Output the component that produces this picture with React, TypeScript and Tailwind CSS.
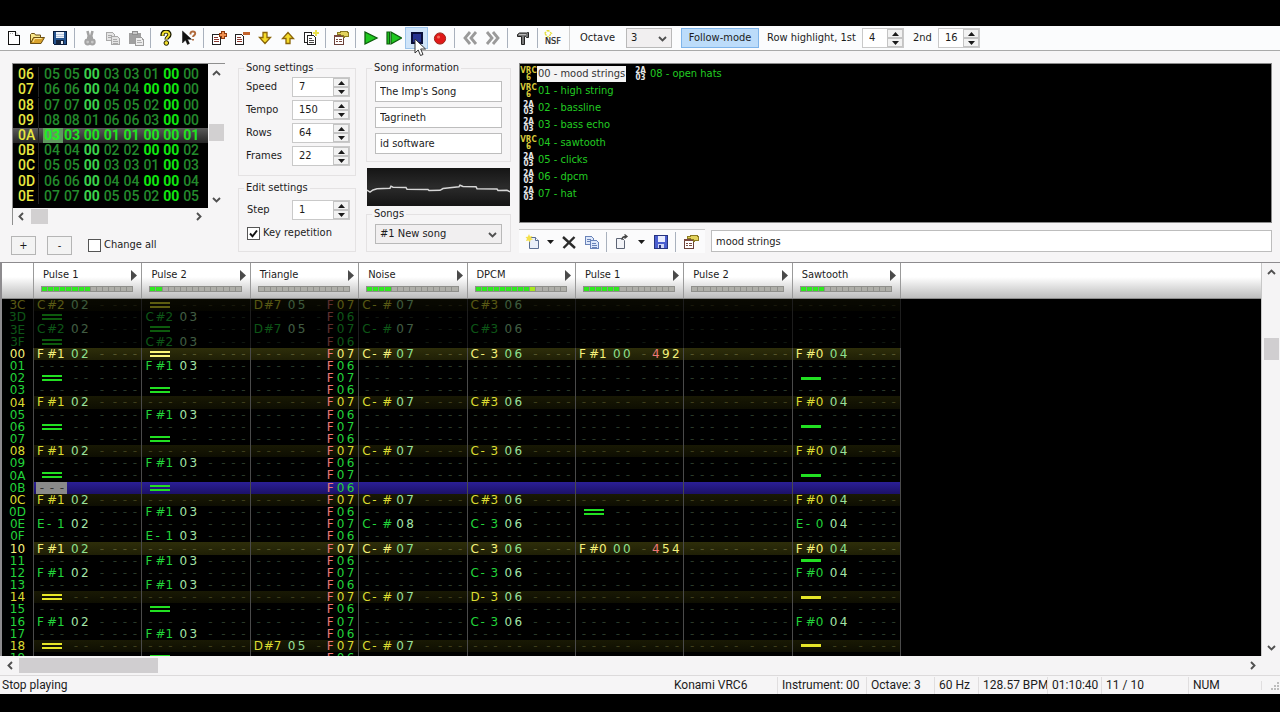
import type { ReactNode } from "react";

/* ---------- data ---------- */

const FRAMES: [string, string][] = [
  ["06", "05 05 00 03 03 01 00 00"],
  ["07", "06 06 00 04 04 00 00 00"],
  ["08", "07 07 00 05 05 02 00 00"],
  ["09", "08 08 01 06 06 03 00 00"],
  ["0A", "03 03 00 01 01 00 00 01"],
  ["0B", "04 04 00 02 02 00 00 02"],
  ["0C", "05 05 00 03 03 01 00 03"],
  ["0D", "06 06 00 04 04 00 00 04"],
  ["0E", "07 07 00 05 05 02 00 05"],
];
const CURRENT_FRAME = "0A";
const CURRENT_VALUES = "03 03 00 01 01 00 00 01".split(" ");

const CHANNELS = [
  { name: "Pulse 1", level: 8 },
  { name: "Pulse 2", level: 2 },
  { name: "Triangle", level: 0 },
  { name: "Noise", level: 4 },
  { name: "DPCM", level: 10 },
  { name: "Pulse 1", level: 6 },
  { name: "Pulse 2", level: 0 },
  { name: "Sawtooth", level: 4 },
];

/* Cell text: note, instrument, effect. "==" halts a note, "__" releases it. */
const PATTERN: { row: string; ghost?: boolean; cells: string[] }[] = [
  { row: "3C", ghost: true, cells: ["C#2 02", "==", "D#7 05 F07", "C-# 07", "C#3 06", "", "", ""] },
  { row: "3D", ghost: true, cells: ["==", "C#2 03", "... .. F06", "", "", "", "", ""] },
  { row: "3E", ghost: true, cells: ["C#2 02", "==", "D#7 05 F07", "C-# 07", "C#3 06", "", "", ""] },
  { row: "3F", ghost: true, cells: ["==", "C#2 03", "... .. F06", "", "", "", "", ""] },
  { row: "00", cells: ["F#1 02", "==", "... .. F07", "C-# 07", "C-3 06", "F#1 00 492", "", "F#0 04"] },
  { row: "01", cells: ["", "F#1 03", "... .. F06", "", "", "", "", ""] },
  { row: "02", cells: ["==", "", "... .. F07", "", "", "", "", "__"] },
  { row: "03", cells: ["", "==", "... .. F06", "", "", "", "", ""] },
  { row: "04", cells: ["F#1 02", "", "... .. F07", "C-# 07", "C#3 06", "", "", "F#0 04"] },
  { row: "05", cells: ["", "F#1 03", "... .. F06", "", "", "", "", ""] },
  { row: "06", cells: ["==", "", "... .. F07", "", "", "", "", "__"] },
  { row: "07", cells: ["", "==", "... .. F06", "", "", "", "", ""] },
  { row: "08", cells: ["F#1 02", "", "... .. F07", "C-# 07", "C-3 06", "", "", "F#0 04"] },
  { row: "09", cells: ["", "F#1 03", "... .. F06", "", "", "", "", ""] },
  { row: "0A", cells: ["==", "", "... .. F07", "", "", "", "", "__"] },
  { row: "0B", cells: ["", "==", "... .. F06", "", "", "", "", ""] },
  { row: "0C", cells: ["F#1 02", "", "... .. F07", "C-# 07", "C#3 06", "", "", "F#0 04"] },
  { row: "0D", cells: ["", "F#1 03", "... .. F06", "", "", "==", "", ""] },
  { row: "0E", cells: ["E-1 02", "", "... .. F07", "C-# 08", "C-3 06", "", "", "E-0 04"] },
  { row: "0F", cells: ["", "E-1 03", "... .. F06", "", "", "", "", ""] },
  { row: "10", cells: ["F#1 02", "", "... .. F07", "C-# 07", "C-3 06", "F#0 00 454", "", "F#0 04"] },
  { row: "11", cells: ["", "F#1 03", "... .. F06", "", "", "", "", "__"] },
  { row: "12", cells: ["F#1 02", "", "... .. F07", "", "C-3 06", "", "", "F#0 04"] },
  { row: "13", cells: ["", "F#1 03", "... .. F06", "", "", "", "", ""] },
  { row: "14", cells: ["==", "", "... .. F07", "C-# 07", "D-3 06", "", "", "__"] },
  { row: "15", cells: ["", "==", "... .. F06", "", "", "", "", ""] },
  { row: "16", cells: ["F#1 02", "", "... .. F07", "", "C-3 06", "", "", "F#0 04"] },
  { row: "17", cells: ["", "F#1 03", "... .. F06", "", "", "", "", ""] },
  { row: "18", cells: ["==", "", "D#7 05 F07", "C-# 07", "", "", "", "__"] },
  { row: "19", cells: ["", "==", "... .. F06", "", "", "", "", ""] },
];
const PLAY_ROW = "0B";

const INSTRUMENTS = [
  { name: "00 - mood strings", vrc: true, selected: true },
  { name: "01 - high string", vrc: true },
  { name: "02 - bassline" },
  { name: "03 - bass echo" },
  { name: "04 - sawtooth", vrc: true },
  { name: "05 - clicks" },
  { name: "06 - dpcm" },
  { name: "07 - hat" },
  { name: "08 - open hats" },
];

/* ---------- icons ---------- */

function Icon({ children, smooth }: { children: ReactNode; smooth?: boolean }) {
  return (
    <svg width="16" height="16" viewBox="0 0 16 16" shapeRendering={smooth ? "auto" : "crispEdges"} aria-hidden="true">
      {children}
    </svg>
  );
}

const NewIcon = () => (
  <Icon>
    <path d="M2.5 1.5h7l4 4v9h-11z" fill="#fff" stroke="#111" />
    <path d="M9.5 1.5v4h4" fill="#ddd" stroke="#111" />
    <path d="M4 3h4" stroke="#aaa" strokeDasharray="1 1" />
  </Icon>
);
const OpenIcon = () => (
  <Icon smooth>
    <path d="M1.5 13.5v-9l1-1h3l1 1.5h5v3" fill="#f7e68a" stroke="#6b4f12" />
    <path d="M1.5 13.5l3-6h11l-3.5 6z" fill="#d9a22c" stroke="#6b4f12" />
    <path d="M4 12l1.700-3.500h7" fill="none" stroke="#fbe9a0" />
  </Icon>
);
const SaveIcon = () => (
  <Icon>
    <path d="M1.500 1.500h13v13h-12l-1-1z" fill="#24538f" stroke="#0b1d3c" />
    <path d="M4 2h8v6H4z" fill="#eef3fa" />
    <path d="M4 4h8M4 6h8" stroke="#b9c9df" />
    <path d="M4 10h8v4H4z" fill="#16243c" />
    <path d="M9 11h2v3H9z" fill="#e7edf5" />
  </Icon>
);
const CutIcon = () => (
  <Icon smooth>
    <path d="M5.500 1l1.800 7M10.500 1L8.700 8" stroke="#a3a3a3" strokeWidth="2.600" />
    <circle cx="5.700" cy="12" r="2.400" fill="#c9c9c9" stroke="#a3a3a3" strokeWidth="2" />
    <circle cx="10.300" cy="12" r="2.400" fill="#c9c9c9" stroke="#a3a3a3" strokeWidth="2" />
    <path d="M5 6.500h6v4H5z" fill="#a3a3a3" />
  </Icon>
);
const CopyIcon = ({ a = "#a9a9a9", b = "#e4e4e4" }: { a?: string; b?: string }) => (
  <Icon>
    <path d="M1.500 2.500h6l2 2v6h-8z" fill={b} stroke={a} />
    <path d="M3 5h4M3 7h5" stroke={a} />
    <path d="M6.500 6.500h6l2 2v6h-8z" fill={b} stroke={a} />
    <path d="M8 9h4M8 11h5M8 13h5" stroke={a} />
  </Icon>
);
const PasteIcon = () => (
  <Icon>
    <path d="M1 3h12v11H1z" fill="#a0a0a0" />
    <path d="M4 1h5v3H4z" fill="#c9c9c9" stroke="#8f8f8f" />
    <path d="M7.500 7.500h6l1.500 2v5.500H7.500z" fill="#ededed" stroke="#9c9c9c" />
    <path d="M9 10h4M9 12h5" stroke="#b0b0b0" />
  </Icon>
);
const HelpIcon = () => (
  <Icon smooth>
    <path d="M4.500 6V4.500a3.500 3 0 0 1 7 0c0 2.500-3 2.500-3 5" fill="none" stroke="#1b1b00" strokeWidth="4.200" />
    <path d="M4.700 5.700V4.500a3.300 2.800 0 0 1 6.600 0c0 2.300-2.900 2.500-2.900 4.700" fill="none" stroke="#f2de2e" strokeWidth="2" />
    <circle cx="8.300" cy="13" r="2.300" fill="#f2de2e" stroke="#1b1b00" />
  </Icon>
);
const ContextHelpIcon = () => (
  <Icon smooth>
    <path d="M1.500 1v12l3-3 2 4.500 2-1-2-4.200h4z" fill="#111" stroke="#111" strokeWidth=".5" />
    <path d="M9.500 4.500V3.500a2.300 2 0 0 1 4.700 0c0 2-2.200 1.700-2.200 3.500M12 9v1.500" fill="none" stroke="#b06a3c" strokeWidth="1.900" />
  </Icon>
);
const Sheet = () => (
  <>
    <path d="M1.500 4.500h6l2 2v8h-8z" fill="#fff" stroke="#222" />
    <path d="M3 7.500h4M3 9.500h5M3 11.500h5" stroke="#8a3a30" />
  </>
);
const AddFrameIcon = () => (
  <Icon>
    <Sheet />
    <path d="M12 1v8M8 5h8" stroke="#8f3a10" strokeWidth="3.500" />
    <path d="M12 2v6M9 5h6" stroke="#ee9050" strokeWidth="1.500" />
  </Icon>
);
const RemoveFrameIcon = () => (
  <Icon>
    <Sheet />
    <path d="M9 3.500h7" stroke="#c2632c" strokeWidth="2.500" />
  </Icon>
);
const DownIcon = () => (
  <Icon smooth>
    <path d="M6 2.500h4v5h3.500L8 13.500 2.500 7.500H6z" fill="#f5dc2a" stroke="#8a6508" strokeWidth="1.300" />
  </Icon>
);
const UpIcon = () => (
  <Icon smooth>
    <path d="M6 13.500h4v-5h3.500L8 2.500 2.500 8.500H6z" fill="#f5dc2a" stroke="#8a6508" strokeWidth="1.300" />
  </Icon>
);
const DuplicateIcon = () => (
  <Icon>
    <path d="M1.500 2.500h7v10h-7z" fill="#fff" stroke="#222" />
    <path d="M4.500 5.500h6l2 2v7h-8z" fill="#fff" stroke="#222" />
    <path d="M6 8.500h3M6 10.500h5M6 12.500h5" stroke="#444" />
    <path d="M13 0v6M10 3h6" stroke="#e8e04a" strokeWidth="1.500" />
  </Icon>
);
const PropertiesIcon = () => (
  <Icon>
    <path d="M1.500 5.500h9v9h-9z" fill="#fff" stroke="#6b4038" />
    <path d="M3 9.500h2M6 9.500h3M3 11.500h2M6 11.500h3" stroke="#7a4a40" />
    <path d="M1 5h9v2H1z" fill="#7a4a40" />
    <path d="M4 2h3V1h8v1h1v5h-4v1h-2V6H8V5H4z" fill="#8b7a22" />
    <path d="M5 3h3V2h6v1h1v3h-4V5H8V4H5z" fill="#e3d25c" />
  </Icon>
);
const PlayIcon = () => (
  <Icon smooth>
    <path d="M2 2v12l12-6z" fill="#1fc81f" stroke="#0b5c0b" strokeWidth="1.300" />
  </Icon>
);
const PlayFromIcon = () => (
  <Icon smooth>
    <path d="M1 2h2.500v12H1z" fill="#1fc81f" stroke="#0b5c0b" strokeWidth="1.200" />
    <path d="M5 2v12l10.500-6z" fill="#1fc81f" stroke="#0b5c0b" strokeWidth="1.200" />
  </Icon>
);
const StopIcon = () => (
  <Icon>
    <path d="M3 3h10v10H3z" fill="#26328f" stroke="#0a0f3a" strokeWidth="2" />
  </Icon>
);
const RecordIcon = () => (
  <Icon smooth>
    <circle cx="8" cy="8.500" r="5.600" fill="#e01818" stroke="#9a2418" />
    <circle cx="6.500" cy="7" r="1.600" fill="#f06a5a" />
  </Icon>
);
const PrevIcon = () => (
  <Icon smooth>
    <path d="M8 2L3 8l5 6M14 2L9 8l5 6" fill="none" stroke="#9a9a9a" strokeWidth="2.800" />
  </Icon>
);
const NextIcon = () => (
  <Icon smooth>
    <path d="M2 2l5 6-5 6M8 2l5 6-5 6" fill="none" stroke="#9a9a9a" strokeWidth="2.800" />
  </Icon>
);
const HammerIcon = () => (
  <Icon smooth>
    <path d="M2.500 6.500v-2l2-1.500h7l1-.5h1v5h-2l-1-1h-1v8h-3v-8z" fill="#777" stroke="#222" />
    <path d="M4 4.500h7" stroke="#bbb" />
  </Icon>
);
const NsfIcon = () => (
  <svg width="18" height="16" viewBox="0 0 18 16" aria-hidden="true">
    <path d="M4 0l3.500 3.500L4 7 .5 3.500z" fill="none" stroke="#e6df3a" strokeWidth="1.400" strokeDasharray="2 1" />
    <text x="1" y="14" fontSize="9" fill="#222" stroke="#222" strokeWidth=".2" fontFamily="DejaVu Sans Condensed, DejaVu Sans, sans-serif">
      NSF
    </text>
  </svg>
);
const NewInstrumentIcon = () => (
  <Icon smooth>
    <path d="M4.500 3.500h6l3 3v8h-9z" fill="#e9effa" stroke="#5b6f95" />
    <path d="M10.500 3.500v3h3" fill="#fff" stroke="#5b6f95" />
    <path d="M4 0l1 2.500L7.500 2 6 4l2 1.500-2.500.5L5 8.500 3.500 6.500 1 7l1-2.300L.5 3l2.300-.3z" fill="#f4e04a" />
  </Icon>
);
const DeleteIcon = () => (
  <Icon smooth>
    <path d="M2 3l12 11M13.500 3L2.500 14" stroke="#2b2b2b" strokeWidth="2.400" />
  </Icon>
);
const LoadInstrumentIcon = () => (
  <Icon smooth>
    <path d="M2.500 4.500h6l2 2v8h-8z" fill="#f3f4f8" stroke="#5d6475" />
    <path d="M8 6c0-3 1.500-3.500 4-3.500M10.500.5L13 2.500l-2.500 2" fill="none" stroke="#444" strokeWidth="1.300" />
  </Icon>
);
const SaveInstrumentIcon = () => (
  <Icon>
    <path d="M1.500 1.500h13v13h-13z" fill="#4b5fd0" stroke="#27337f" />
    <path d="M5 2h7v6H5z" fill="#e8ecff" />
    <path d="M5 10h6v4H5z" fill="#cfd6f7" />
    <path d="M6 11h2v3H6z" fill="#27337f" />
  </Icon>
);

function Chevron({ dir }: { dir: "left" | "right" | "up" | "down" }) {
  const d = {
    left: "M7 2L3.500 5.500 7 9",
    right: "M4 2l3.500 3.500L4 9",
    up: "M2 7l3.500-3.500L9 7",
    down: "M2 4l3.500 3.500L9 4",
  }[dir];
  return (
    <svg width="11" height="11" viewBox="0 0 11 11" aria-hidden="true">
      <path d={d} fill="none" stroke="#505050" strokeWidth="1.900" />
    </svg>
  );
}

/* ---------- small controls ---------- */

function ToolButton({ label, active, children }: { label: string; active?: boolean; children: ReactNode }) {
  return (
    <button
      type="button"
      aria-label={label}
      className={
        active
          ? "flex h-[22px] w-[23px] items-center justify-center border border-[#9cc3ea] bg-[#cfe4f9]"
          : "flex h-[22px] w-[23px] items-center justify-center"
      }
    >
      {children}
    </button>
  );
}

function Separator() {
  return (
    <div className="flex h-[20px] w-[7px] justify-center">
      <div className="w-px bg-[#a9b1bd]" />
    </div>
  );
}

function Arrow({ up }: { up?: boolean }) {
  return (
    <svg width="7" height="4" viewBox="0 0 7 4" aria-hidden="true">
      <path d={up ? "M0 4L3.500 0 7 4z" : "M0 0l3.500 4L7 0z"} fill="#1a1a1a" />
    </svg>
  );
}

function Spinner({ id, value, className }: { id: string; value: string; className: string }) {
  return (
    <div className={"flex border border-[#c9c9c9] bg-white " + className}>
      <input id={id} defaultValue={value} className="min-w-0 flex-1 bg-transparent pl-[6px] outline-none" />
      <div className="flex w-[16px] flex-col">
        <button type="button" aria-label={"Increase " + id} className="flex flex-1 items-center justify-center border border-[#c4c4c4] bg-[#f2f2f2]">
          <Arrow up />
        </button>
        <button type="button" aria-label={"Decrease " + id} className="flex flex-1 items-center justify-center border border-[#c4c4c4] bg-[#f2f2f2]">
          <Arrow />
        </button>
      </div>
    </div>
  );
}

function Dropdown({ id, label, value, className }: { id: string; label: string; value: string; className: string }) {
  return (
    <div className={"grid items-center border border-[#b9b9b9] bg-[#f1eff0] " + className}>
      <select id={id} aria-label={label} defaultValue={value} className="h-full w-full appearance-none bg-transparent pl-[4px] outline-none [grid-area:1/1]">
        <option>{value}</option>
      </select>
      <span className="pointer-events-none mr-[3px] justify-self-end [grid-area:1/1]">
        <Chevron dir="down" />
      </span>
    </div>
  );
}

function CheckBox({ id, label, checked }: { id: string; label: string; checked?: boolean }) {
  return (
    <div className="flex items-center gap-[3px]">
      <span className="grid size-[13px]">
        <input
          id={id}
          type="checkbox"
          defaultChecked={checked}
          className="peer size-[13px] appearance-none border border-[#555] bg-white [grid-area:1/1]"
        />
        <svg viewBox="0 0 13 13" className="pointer-events-none size-[13px] opacity-0 [grid-area:1/1] peer-checked:opacity-100" aria-hidden="true">
          <path d="M3 6.500l2.500 2.800L10 3.500" fill="none" stroke="#111" strokeWidth="1.900" />
        </svg>
      </span>
      <label htmlFor={id}>{label}</label>
    </div>
  );
}

function Group({ title, className, children }: { title: string; className: string; children: ReactNode }) {
  return (
    <fieldset className={"min-w-0 border border-[#e4e2e3] " + className}>
      <legend className="ml-[5px] px-[2px] leading-4">{title}</legend>
      {children}
    </fieldset>
  );
}

/* ---------- main toolbar ---------- */

function Toolbar() {
  return (
    <div className="flex h-[25px] items-center border-b border-[#a9a9a9] bg-[#fbfcfd] pl-[2px]" role="toolbar">
      <ToolButton label="New"><NewIcon /></ToolButton>
      <ToolButton label="Open"><OpenIcon /></ToolButton>
      <ToolButton label="Save"><SaveIcon /></ToolButton>
      <Separator />
      <ToolButton label="Cut"><CutIcon /></ToolButton>
      <ToolButton label="Copy"><CopyIcon /></ToolButton>
      <ToolButton label="Paste"><PasteIcon /></ToolButton>
      <Separator />
      <ToolButton label="About"><HelpIcon /></ToolButton>
      <ToolButton label="Help"><ContextHelpIcon /></ToolButton>
      <Separator />
      <ToolButton label="Add frame"><AddFrameIcon /></ToolButton>
      <ToolButton label="Remove frame"><RemoveFrameIcon /></ToolButton>
      <ToolButton label="Move frame down"><DownIcon /></ToolButton>
      <ToolButton label="Move frame up"><UpIcon /></ToolButton>
      <ToolButton label="Duplicate frame"><DuplicateIcon /></ToolButton>
      <Separator />
      <ToolButton label="Module properties"><PropertiesIcon /></ToolButton>
      <Separator />
      <ToolButton label="Play"><PlayIcon /></ToolButton>
      <ToolButton label="Play from cursor"><PlayFromIcon /></ToolButton>
      <div className="relative">
        <ToolButton label="Stop" active><StopIcon /></ToolButton>
        <svg width="13" height="19" viewBox="0 0 13 19" className="pointer-events-none absolute top-[11px] left-[9px] z-10" aria-hidden="true">
          <path d="M1 1v14l3.200-3 2.300 5.500 2.500-1L6.700 11H11.500z" fill="#fff" stroke="#333" />
        </svg>
      </div>
      <ToolButton label="Record"><RecordIcon /></ToolButton>
      <Separator />
      <ToolButton label="Previous song"><PrevIcon /></ToolButton>
      <ToolButton label="Next song"><NextIcon /></ToolButton>
      <Separator />
      <ToolButton label="Configuration"><HammerIcon /></ToolButton>
      <Separator />
      <ToolButton label="Create NSF"><NsfIcon /></ToolButton>
      <div className="ml-[5px] h-full w-px bg-[#cfcfcf]" />
      <label htmlFor="octave" className="ml-[10px] w-[46px]">Octave</label>
      <Dropdown id="octave" label="Octave" value="3" className="h-[20px] w-[46px]" />
      <button type="button" className="ml-[9px] h-[20px] w-[78px] border border-[#7eb4ea] bg-[#bcdcfa]">Follow-mode</button>
      <label htmlFor="highlight1" className="ml-[8px] w-[95px] whitespace-nowrap">Row highlight, 1st</label>
      <Spinner id="highlight1" value="4" className="h-[20px] w-[42px]" />
      <label htmlFor="highlight2" className="ml-[9px] w-[25px]">2nd</label>
      <Spinner id="highlight2" value="16" className="h-[20px] w-[42px]" />
    </div>
  );
}

/* ---------- upper panels ---------- */

function FrameEditor() {
  return (
    <div className="ml-[12px] w-[213px] pt-[12px]">
      <div className="flex border-t border-l border-[#8f8f8f]">
        <table className="flex h-[144px] w-[195px] bg-black pt-[3px] pb-[4px] font-['Roboto'] text-[14px] leading-[15px]">
          <tbody className="flex flex-1 flex-col">
            {FRAMES.map(([frame, values]) => {
              const current = frame === CURRENT_FRAME;
              return (
                <tr
                  key={frame}
                  className={current ? "flex flex-1 items-center bg-linear-to-b from-[#5a5a5a] to-[#262626]" : "flex flex-1 items-center"}
                >
                  <th className="w-[26px] border-r border-[#222] pl-[5px] text-left font-medium text-[#e8e840]">{frame}</th>
                  <td className="grid w-[163px] grid-cols-8 pl-[4px]">
                    {values.split(" ").map((v, i) => (
                      <span
                        key={i}
                        className={
                          current && i === 0
                            ? "bg-[#5f9a5f] pl-px font-bold text-[#20f020]"
                            : current
                              ? "pl-px font-bold text-[#20e420]"
                              : v === CURRENT_VALUES[i]
                                ? i === 2
                                  ? "pl-px font-bold text-[#3cd44c]"
                                  : "pl-px font-bold text-[#10e810]"
                                : "pl-px font-medium text-[#238a2c]"
                        }
                      >
                        {v}
                      </span>
                    ))}
                  </td>
                </tr>
              );
            })}
          </tbody>
        </table>
        <div className="flex w-[16px] flex-col items-center pt-[4px] pb-[3px]">
          <Chevron dir="up" />
          <div className="mt-[45px] h-[17px] w-[15px] bg-[#d2d0d1]" />
          <div className="flex-1" />
          <Chevron dir="down" />
        </div>
      </div>
      <div className="flex h-[17px] w-[196px] items-center border-l border-[#8f8f8f] pl-[3px]">
        <Chevron dir="left" />
        <div className="ml-[4px] h-[15px] w-[17px] bg-[#d2d0d1]" />
        <div className="flex-1" />
        <Chevron dir="right" />
        <div className="w-[4px]" />
      </div>
      <div className="mt-[11px] -ml-px flex items-center">
        <button type="button" className="h-[19px] w-[25px] border border-[#b5b5b5] bg-[#f3f3f3] leading-[14px]">+</button>
        <button type="button" className="mr-[16px] ml-[11px] h-[19px] w-[25px] border border-[#b5b5b5] bg-[#f3f3f3] leading-[14px]">-</button>
        <CheckBox id="change-all" label="Change all" />
      </div>
    </div>
  );
}

function SettingRow({ label, value }: { label: string; value: string }) {
  const id = label.toLowerCase();
  return (
    <div className="flex items-center justify-between">
      <label htmlFor={id}>{label}</label>
      <Spinner id={id} value={value} className="h-[20px] w-[58px]" />
    </div>
  );
}

function SongPanels() {
  return (
    <>
      <div className="ml-[13px] flex w-[118px] flex-col gap-[4px] pt-[9px]">
        <Group title="Song settings" className="h-[116px]">
          <div className="flex flex-col gap-[3px] pt-px pr-[5px] pl-[7px]">
            <SettingRow label="Speed" value="7" />
            <SettingRow label="Tempo" value="150" />
            <SettingRow label="Rows" value="64" />
            <SettingRow label="Frames" value="22" />
          </div>
        </Group>
        <Group title="Edit settings" className="h-[72px]">
          <div className="flex flex-col gap-[5px] pt-[4px] pr-[5px] pl-[8px]">
            <SettingRow label="Step" value="1" />
            <CheckBox id="key-repetition" label="Key repetition" checked />
          </div>
        </Group>
      </div>
      <div className="ml-[10px] w-[145px] pt-[9px]">
        <Group title="Song information" className="h-[102px]">
          <div className="flex flex-col gap-[5px] px-[8px] pt-[5px]">
            <input aria-label="Title" defaultValue="The Imp's Song" className="h-[21px] w-full border border-[#bdbdbd] bg-white px-[4px]" />
            <input aria-label="Artist" defaultValue="Tagrineth" className="h-[21px] w-full border border-[#bdbdbd] bg-white px-[4px]" />
            <input aria-label="Copyright" defaultValue="id software" className="h-[21px] w-full border border-[#bdbdbd] bg-white px-[4px]" />
          </div>
        </Group>
        <svg viewBox="0 0 143 38" className="mt-[6px] ml-px h-[38px] w-[143px] bg-linear-to-b from-[#151515] via-[#2b2b2b] to-[#151515]" aria-hidden="true">
          <path
            d="M0 22l3 2 3-2 4-1.300 13-.5 1-2 2 1 13 .3 1 1.800 21 .2 1 1 11-.2 3-1.800 9-1 7-.8 1-1.500 3 1.200 13 .3 1 2 20 .3 1 1.500 9-.2 3 1.500"
            fill="none"
            stroke="#d6d6d6"
            strokeWidth="1.500"
          />
        </svg>
        <Group title="Songs" className="h-[46px]">
          <div className="px-[8px] pt-[2px]">
            <Dropdown id="songs" label="Songs" value="#1 New song" className="h-[20px]" />
          </div>
        </Group>
      </div>
    </>
  );
}

function InstrumentPanel() {
  return (
    <div className="mr-[8px] ml-[8px] flex min-w-0 flex-1 flex-col pt-[12px]">
      <div className="h-[160px] border border-[#8a8a8a] bg-black pt-px">
        <ul className="grid h-[138px] w-fit auto-cols-[112px] grid-flow-col grid-rows-8">
          {INSTRUMENTS.map((it) => (
            <li key={it.name} className="flex items-center whitespace-nowrap text-[#22cc22]">
              <span
                className={
                  it.vrc
                    ? "w-[17px] text-center text-[8px] leading-[7px] font-bold text-[#d8c83a]"
                    : "w-[17px] text-center text-[8px] leading-[7px] font-bold text-[#e8e8e8]"
                }
              >
                {it.vrc ? "VRC" : "2A"}
                <br />
                {it.vrc ? "6" : "03"}
              </span>
              <span className={it.selected ? "bg-[#f4f4f4] px-px leading-4 text-[#333]" : "px-px leading-4"}>{it.name}</span>
            </li>
          ))}
        </ul>
      </div>
      <div className="mt-[6px] flex items-center">
        <div className="flex h-[24px] w-[186px] items-center border-t border-[#c9c9c9] bg-[#fbfbfc] pl-[2px]" role="toolbar">
          <ToolButton label="New instrument"><NewInstrumentIcon /></ToolButton>
          <button type="button" aria-label="New instrument type" className="flex w-[13px] justify-center"><Arrow /></button>
          <ToolButton label="Remove instrument"><DeleteIcon /></ToolButton>
          <ToolButton label="Clone instrument"><CopyIcon a="#6a83b8" b="#dfe9fb" /></ToolButton>
          <Separator />
          <ToolButton label="Load instrument"><LoadInstrumentIcon /></ToolButton>
          <button type="button" aria-label="Instrument library" className="flex w-[16px] justify-center"><Arrow /></button>
          <ToolButton label="Save instrument"><SaveInstrumentIcon /></ToolButton>
          <Separator />
          <ToolButton label="Edit instrument"><PropertiesIcon /></ToolButton>
        </div>
        <input aria-label="Instrument name" defaultValue="mood strings" className="ml-[6px] h-[22px] min-w-0 flex-1 border border-[#bdbdbd] bg-white px-[4px]" />
      </div>
    </div>
  );
}

/* ---------- pattern editor ---------- */

type Tone = { note: string; inst: string; dash: string; bar: string };

const TONES: Record<"major" | "minor" | "plain", Tone> = {
  major: { note: "text-[#f4f07a]", inst: "text-[#8fe08f]", dash: "text-[#55552c]", bar: "bg-[#fdf77a]" },
  minor: { note: "text-[#dcdc32]", inst: "text-[#9be09b]", dash: "text-[#3e3e1c]", bar: "bg-[#e6e628]" },
  plain: { note: "text-[#22d43a]", inst: "text-[#a4e4a8]", dash: "text-[#2a3a2a]", bar: "bg-[#22e022]" },
};

function Chars({ text, color, dash }: { text: string; color: string; dash: string }) {
  return (
    <>
      {text.split("").map((c, i) => (
        <span key={i} className={c === "." ? "w-[10px] text-center " + dash : "w-[10px] " + color}>
          {c === "." ? "-" : c}
        </span>
      ))}
    </>
  );
}

function Cell({ text, tone, cursor, playing }: { text: string; tone: Tone; cursor: boolean; playing: boolean }) {
  const [note = "...", inst = "..", fx = "..."] = text ? text.split(" ") : [];
  const bars = note === "==" ? 2 : note === "__" ? 1 : 0;
  const dash = playing ? "text-transparent" : tone.dash;
  return (
    <td className="flex items-center border-r border-[#4a4a4a] pl-[2px]">
      <span className={cursor ? "flex w-[31px] bg-[#8a8a8a] pl-px" : "flex w-[31px] pl-px"}>
        {bars ? (
          <span className="ml-[5px] flex h-[12px] w-[20px] flex-col justify-center gap-[2px]">
            <span className={(bars === 2 ? "h-[2px] " : "h-[3px] ") + tone.bar} />
            {bars === 2 && <span className={"h-[2px] " + tone.bar} />}
          </span>
        ) : (
          <Chars text={note} color={tone.note} dash={cursor ? "text-[#333]" : dash} />
        )}
      </span>
      <span className="ml-[4px] flex">
        <Chars text={inst} color={tone.inst} dash={dash} />
      </span>
      <span className={"ml-[6px] w-[10px] text-center " + dash}>-</span>
      <span className="ml-[3px] flex">
        {fx === "..." ? (
          <Chars text={fx} color="" dash={dash} />
        ) : (
          <>
            <Chars text={fx[0]} color="text-[#f07878]" dash="" />
            <Chars text={fx.slice(1)} color={tone.note} dash="" />
          </>
        )}
      </span>
    </td>
  );
}

function Meter({ level }: { level: number }) {
  return (
    <span className="flex h-[6px] gap-px bg-[#8f8f8b] px-px py-px">
      {Array.from({ length: 15 }, (_, i) => (
        <span key={i} className={i < level ? (i > 8 ? "flex-1 bg-[#a8e81c]" : "flex-1 bg-[#2ee81e]") : "flex-1 bg-[#aeaea8]"} />
      ))}
    </span>
  );
}

function PatternEditor() {
  return (
    <div className="flex min-h-0 flex-1 border-t border-l-2 border-[#8d8b8e]">
      <div className="flex min-h-0 min-w-0 flex-1 flex-col">
        <div className="flex h-[36px] shrink-0 border-b border-[#8a8a8a] bg-linear-to-b from-white from-40% to-[#bdbdbd]">
          <div className="w-[32px] border-r border-[#9a9a9a]" />
          <div className="grid w-[867px] grid-cols-8">
            {CHANNELS.map((c, i) => (
              <div key={i} className="border-r border-[#9a9a9a] pt-[4px] pr-[8px] pl-[7px]">
                <div className="flex h-[16px] items-center justify-between pl-[2px]">
                  <span>{c.name}</span>
                  <svg width="6" height="11" viewBox="0 0 6 11" className="-mr-[4px]" aria-hidden="true">
                    <path d="M0 0l6 5.500L0 11z" fill="#4a4a4a" />
                  </svg>
                </div>
                <div className="mt-[3px]">
                  <Meter level={c.level} />
                </div>
              </div>
            ))}
          </div>
        </div>
        <div className="min-h-0 flex-1 overflow-hidden bg-black">
          <table className="flex h-[365px] w-[899px] font-['DejaVu_Sans'] text-[12px] leading-[12px]">
            <tbody className="flex flex-1 flex-col">
              {PATTERN.map((r) => {
                const n = parseInt(r.row, 16);
                const playing = r.row === PLAY_ROW;
                const kind = r.ghost ? (n % 4 === 0 ? "minor" : "plain") : n % 16 === 0 ? "major" : n % 4 === 0 ? "minor" : "plain";
                const tone = TONES[kind];
                const bg = playing
                  ? "bg-linear-to-b from-[#2b1f96] to-[#1c1168]"
                  : kind === "major"
                    ? "bg-linear-to-b from-[#2e2e0a] to-[#1f1f06]"
                    : kind === "minor"
                      ? "bg-linear-to-b from-[#191904] to-[#0e0e02]"
                      : "bg-transparent";
                return (
                  <tr key={r.row} className={r.ghost ? "flex min-h-0 flex-1 opacity-40" : "flex min-h-0 flex-1"}>
                    <th className={"flex w-[32px] items-end justify-center border-r border-[#4a4a4a] font-normal " + tone.note}>{r.row}</th>
                    <td className={"flex-1 " + bg}>
                      <table className="block h-full">
                        <tbody className="block h-full">
                          <tr className="grid h-full grid-cols-8">
                            {r.cells.map((c, i) => (
                              <Cell key={i} text={c} tone={tone} cursor={playing && i === 0} playing={playing} />
                            ))}
                          </tr>
                        </tbody>
                      </table>
                    </td>
                  </tr>
                );
              })}
            </tbody>
          </table>
        </div>
      </div>
      <div className="flex w-[19px] flex-col items-center border-l border-[#c8c8c8] bg-[#f5f4f5] pt-[4px] pb-[3px]">
        <Chevron dir="up" />
        <div className="mt-[60px] h-[22px] w-[15px] bg-[#d0ced0]" />
        <div className="flex-1" />
        <Chevron dir="down" />
      </div>
    </div>
  );
}

/* ---------- status bar ---------- */

function StatusBar() {
  const cell = "border-l border-[#e0dedf] whitespace-nowrap";
  return (
    <div className="flex h-[19px] items-center border-t border-[#dcdadb] font-['Roboto'] text-[12px] leading-[17px] text-[#1c1c1c]">
      <span className="flex-1 pl-[2px]">Stop playing</span>
      <span className="w-[103px]">Konami VRC6</span>
      <span className={cell + " w-[89px] pl-[4px]"}>Instrument: 00</span>
      <span className={cell + " w-[68px] pl-[4px]"}>Octave: 3</span>
      <span className={cell + " w-[44px] pl-[4px]"}>60 Hz</span>
      <span className={cell + " w-[69px] pl-[4px]"}>128.57 BPM</span>
      <span className={cell + " w-[54px] pl-[4px]"}>01:10:40</span>
      <span className={cell + " w-[56px] pl-[4px]"}>11 / 10</span>
      <span className={cell + " w-[31px]"} />
      <span className={cell + " w-[36px] pl-[4px]"}>NUM</span>
      <span className={cell + " w-[37px]"} />
      <span className={cell + " flex w-[19px] justify-end pr-px"}>
        <svg width="9" height="9" viewBox="0 0 9 9" aria-hidden="true">
          <path d="M7 1h2v2H7zM4 4h2v2H4zM7 4h2v2H7zM1 7h2v2H1zM4 7h2v2H4zM7 7h2v2H7z" fill="#bdbdbd" />
        </svg>
      </span>
    </div>
  );
}

export default function App() {
  return (
    <div className="flex h-screen flex-col bg-black pt-[26px] pb-[18px]">
      <main className="flex min-h-0 flex-1 flex-col bg-[#f6f5f6] font-['DejaVu_Sans_Condensed'] text-[11px] text-[#1c1c1c]">
        <Toolbar />
        <div className="flex h-[211px] shrink-0">
          <FrameEditor />
          <SongPanels />
          <InstrumentPanel />
        </div>
        <PatternEditor />
        <div className="flex h-[19px] shrink-0 items-center bg-[#f5f4f5] pl-[5px]">
          <Chevron dir="left" />
          <div className="ml-[3px] h-[15px] w-[139px] bg-[#d0ced0]" />
          <div className="flex-1" />
          <div className="pr-[22px]">
            <Chevron dir="right" />
          </div>
        </div>
        <StatusBar />
      </main>
    </div>
  );
}
